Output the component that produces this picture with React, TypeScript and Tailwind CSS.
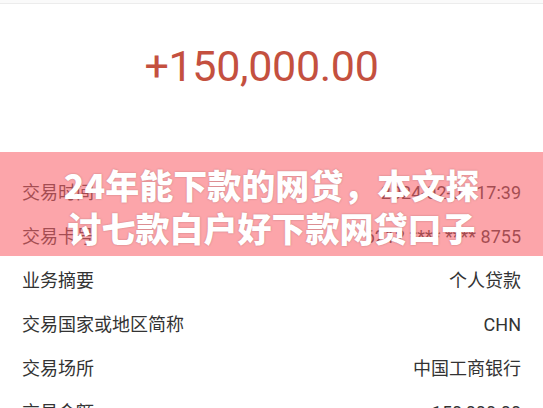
const rows = [
  { label: "交易时间", value: "2024-02-01 17:39" },
  { label: "交易卡号", value: "6212 **** **** 8755" },
  { label: "业务摘要", value: "个人贷款" },
  { label: "交易国家或地区简称", value: "CHN" },
  { label: "交易场所", value: "中国工商银行" },
  { label: "交易金额", value: "150,000.00" },
];

const font = "font-['Roboto','Noto_Sans_CJK_SC',sans-serif]";

export default function App() {
  return (
    <div className={`relative w-[543px] h-[408px] overflow-hidden bg-white ${font}`}>
      <div className="h-[4px] bg-[#fafafa] border-b border-[#ececec]" />
      <div className="h-[166px] flex justify-center pt-[32px] pr-[20px]">
        <div className="text-[43px] leading-[60px] text-[#c4503f] tracking-[-0.3px]">+150,000.00</div>
      </div>

      <div className="flex flex-col">
        {rows.map((r) => (
          <div key={r.label} className="h-[44px] px-[22px] flex items-center justify-between text-[18px] text-[#333]">
            <span>{r.label}</span>
            <span>{r.value}</span>
          </div>
        ))}
      </div>

      <div className="absolute left-0 right-0 top-[152px] h-[104px] bg-[rgba(250,97,106,0.57)] flex flex-col items-center justify-center pt-[4px]">
        <div className="text-white font-black text-[34px] leading-[43px] font-['Noto_Sans_CJK_SC',sans-serif] [text-shadow:0_0_2px_rgba(80,40,40,0.35)] text-center">
          <div>24年能下款的网贷，本文探</div>
          <div>讨七款白户好下款网贷口子</div>
        </div>
      </div>
    </div>
  );
}
